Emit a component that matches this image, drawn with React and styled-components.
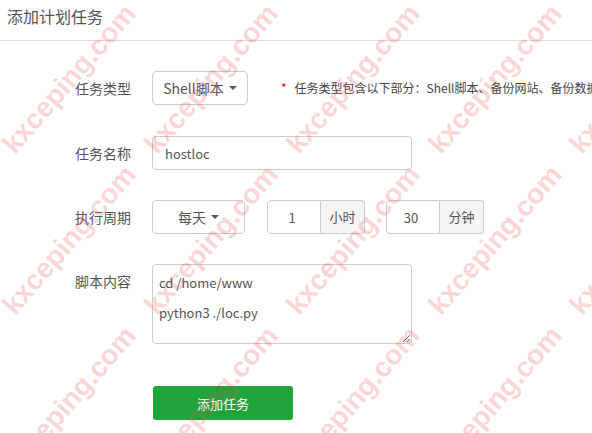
import React from 'react';
import styled, {createGlobalStyle} from 'styled-components';

const GlobalStyle = createGlobalStyle`
  body {
    margin: 0;
    background: #fff;
    font-family: "Noto Sans CJK SC", "Noto Sans", sans-serif;
  }
`;

const Page = styled.div`
  position: relative;
  width: 592px;
  height: 433px;
  overflow: hidden;
  background: #fff;
  color: #555;
`;

const Header = styled.div`
  box-sizing: border-box;
  height: 41px;
  padding: 0 7px;
  line-height: 32px;
  font-size: 16px;
  color: #555;
  border-bottom: 1px solid #ddd;
`;

const Form = styled.div`
  padding-top: 30px;
`;

const FormRow = styled.div`
  display: flex;
  align-items: flex-start;
  margin-bottom: ${({gap}) => gap}px;
`;

const Label = styled.div`
  flex-shrink: 0;
  width: 131px;
  margin-right: 21px;
  text-align: right;
  line-height: 34px;
  font-size: 14px;
  color: #555;
`;

const SelectButton = styled.button`
  box-sizing: border-box;
  display: inline-flex;
  align-items: center;
  justify-content: center;
  flex-shrink: 0;
  width: ${({width}) => width}px;
  height: 34px;
  padding: 0;
  border: 1px solid #ccc;
  border-radius: 4px;
  background: #fff;
  font-family: inherit;
  font-size: 14px;
  color: #555;
`;

const Caret = styled.span`
  display: inline-block;
  margin-left: 5px;
  border-top: 4px solid #555;
  border-left: 4px solid transparent;
  border-right: 4px solid transparent;
`;

const Hint = styled.div`
  margin-left: 33px;
  line-height: 34px;
  font-size: 12px;
  color: #444;
  white-space: nowrap;
`;

const Star = styled.span`
  color: #f00;
  margin-right: 8px;
`;

const TextInput = styled.input`
  box-sizing: border-box;
  width: 260px;
  height: 34px;
  padding: 0 12px;
  border: 1px solid #ccc;
  border-radius: 4px;
  font-family: inherit;
  font-size: 13px;
  color: #555;
  outline: none;
`;

const InputGroup = styled.div`
  display: flex;
  margin-left: ${({offset}) => offset}px;
`;

const GroupInput = styled.input`
  box-sizing: border-box;
  width: 54px;
  height: 34px;
  padding: 0 4px 0 0;
  border: 1px solid #ccc;
  border-radius: 4px 0 0 4px;
  text-align: center;
  font-family: inherit;
  font-size: 13px;
  color: #555;
  outline: none;
`;

const Addon = styled.span`
  box-sizing: border-box;
  width: 44px;
  height: 34px;
  line-height: 32px;
  text-align: center;
  border: 1px solid #ccc;
  border-left: none;
  border-radius: 0 4px 4px 0;
  background: #f5f5f5;
  font-size: 13px;
  color: #555;
`;

const ScriptArea = styled.textarea`
  box-sizing: border-box;
  width: 260px;
  height: 80px;
  padding: 10px 6px;
  border: 1px solid #ccc;
  border-radius: 4px;
  font-family: inherit;
  font-size: 13px;
  line-height: 15px;
  color: #555;
  outline: none;
`;

const SubmitButton = styled.button`
  width: 140px;
  height: 34px;
  margin-left: 153px;
  border: none;
  border-radius: 3px;
  background: #20a53a;
  color: #fff;
  font-family: inherit;
  font-size: 13px;
`;

const Watermarks = styled.div`
  position: absolute;
  left: -1px;
  top: -2px;
  display: grid;
  grid-template-columns: repeat(5, 141.7px);
  grid-auto-rows: 161px;
  pointer-events: none;
`;

const Mark = styled.div`
  display: flex;
  align-items: center;
  justify-content: center;

  span {
    display: block;
    transform: rotate(-49deg);
    font-family: "Liberation Sans", Arial, sans-serif;
    font-weight: bold;
    font-size: 28px;
    color: rgba(240, 70, 70, 0.24);
    white-space: nowrap;
  }
`;

const marks = Array.from({length: 15});

const App = () => (
  <Page>
    <GlobalStyle />
    <Header>添加计划任务</Header>
    <Form>
      <FormRow gap={31}>
        <Label>任务类型</Label>
        <SelectButton width={96}>Shell脚本<Caret /></SelectButton>
        <Hint>
          <Star>*</Star>任务类型包含以下部分：Shell脚本、备份网站、备份数据库、日志切割、释放内存、访问URL
        </Hint>
      </FormRow>
      <FormRow gap={30}>
        <Label>任务名称</Label>
        <TextInput defaultValue="hostloc" />
      </FormRow>
      <FormRow gap={30}>
        <Label>执行周期</Label>
        <SelectButton width={93}>每天<Caret /></SelectButton>
        <InputGroup offset={22}>
          <GroupInput defaultValue="1" />
          <Addon>小时</Addon>
        </InputGroup>
        <InputGroup offset={21}>
          <GroupInput defaultValue="30" />
          <Addon>分钟</Addon>
        </InputGroup>
      </FormRow>
      <FormRow gap={42}>
        <Label>脚本内容</Label>
        <ScriptArea defaultValue={'cd /home/www\n\npython3 ./loc.py'} />
      </FormRow>
      <SubmitButton>添加任务</SubmitButton>
    </Form>
    <Watermarks>
      {marks.map((_, i) => (
        <Mark key={i}><span>kxceping.com</span></Mark>
      ))}
    </Watermarks>
  </Page>
);

export default App;
